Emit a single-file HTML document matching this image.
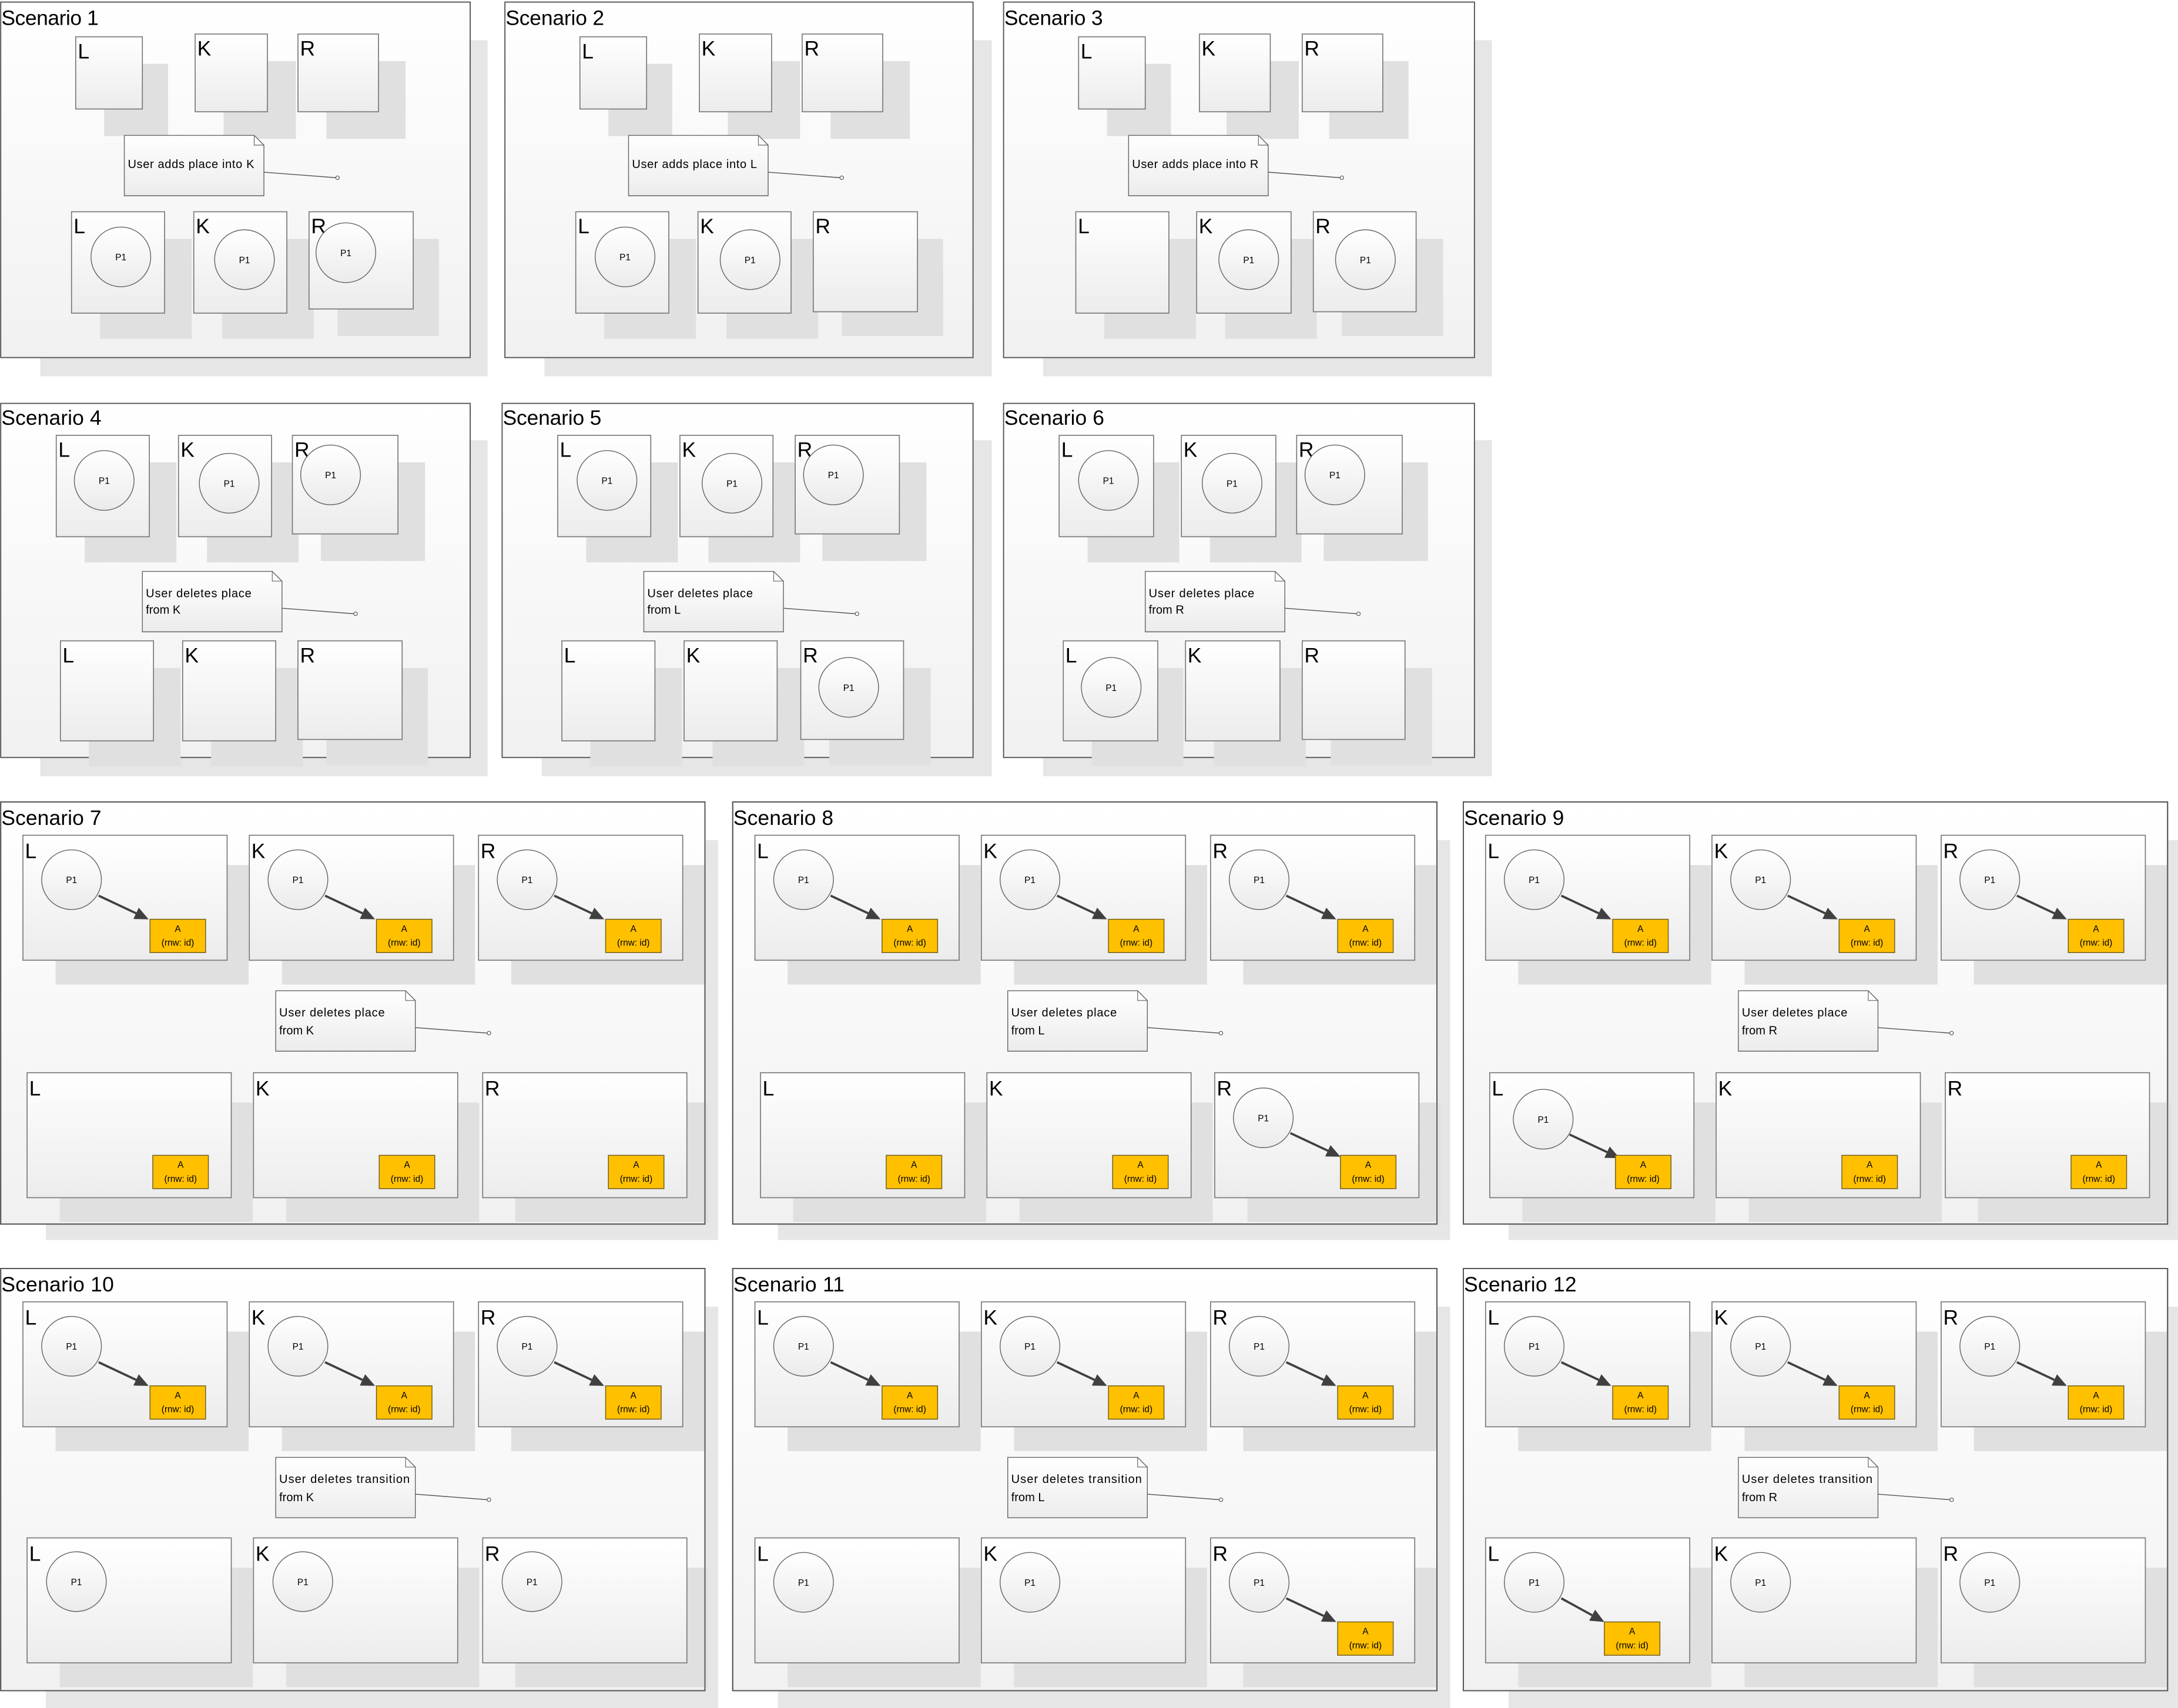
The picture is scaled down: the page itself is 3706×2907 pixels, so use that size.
<!DOCTYPE html>
<html><head><meta charset="utf-8"><style>
html,body{margin:0;padding:0;background:#fff;}
svg{display:block;}
text{font-family:"Liberation Sans",sans-serif;fill:#000;}
.t{font-size:15px;}
.l{font-size:15px;}
.p{font-size:6.5px;text-anchor:middle;}
.a{font-size:6.5px;text-anchor:middle;}
.n{font-size:8.5px;}
.fs{fill:#e6e6e6;}
.fr{fill:url(#gf);stroke:#555;stroke-width:0.8;}
.fo{fill:none;stroke:#555;stroke-width:0.8;}
.bs{fill:#e0e0e0;}
.bx{fill:url(#gb);stroke:#777;stroke-width:0.7;}
</style></head><body>
<svg width="3706" height="2907" viewBox="0 0 1568 1230" preserveAspectRatio="none" xmlns="http://www.w3.org/2000/svg">
<defs>
<linearGradient id="gf" x1="0" y1="0" x2="0" y2="1"><stop offset="0" stop-color="#ffffff"/><stop offset="1" stop-color="#f1f1f1"/></linearGradient>
<linearGradient id="gb" x1="0" y1="0" x2="0" y2="1"><stop offset="0" stop-color="#ffffff"/><stop offset="1" stop-color="#ececec"/></linearGradient>
<linearGradient id="gc" x1="0" y1="0" x2="0" y2="1"><stop offset="0" stop-color="#ffffff"/><stop offset="1" stop-color="#ebebeb"/></linearGradient>
<g id="B"><rect class="bs" x="24" y="22" width="139" height="86"/><rect class="bx" x="0.5" y="0.5" width="147" height="90"/></g>
<g id="C"><circle r="21.5" fill="url(#gc)" stroke="#666" stroke-width="0.6"/></g>
<g id="AR"><line x1="55" y1="44" x2="82" y2="56.7" stroke="#404040" stroke-width="1.6"/><polygon points="91,61 80.04,60.8 83.88,52.66" fill="#404040"/></g>
<g id="AB"><rect x="0" y="0" width="40" height="24" fill="#ffc000" stroke="#6b5a1e" stroke-width="0.6"/></g>
<g id="N"><path d="M0.5,0.5 H94 L101,7.5 V44 H0.5 Z" fill="url(#gb)" stroke="#666" stroke-width="0.6"/><path d="M94,0.5 V7.5 H101" fill="none" stroke="#666" stroke-width="0.5"/><line x1="101" y1="27" x2="153" y2="31" stroke="#555" stroke-width="0.6"/><circle cx="154" cy="31" r="1.3" fill="#fff" stroke="#555" stroke-width="0.5"/></g>
</defs>

<!-- ROW 1 -->
<g>
<rect class="fs" x="29" y="29" width="322" height="242"/><rect class="fr" x="0.5" y="1.5" width="338" height="256"/>
<text class="t" x="1" y="18" textLength="70">Scenario 1</text>
<rect class="bs" x="75" y="46" width="46" height="52"/><rect class="bx" x="54.5" y="26.5" width="48" height="52"/><text class="l" x="56" y="42">L</text>
<rect class="bs" x="161" y="44" width="52" height="56"/><rect class="bx" x="140.5" y="24.5" width="52" height="56"/><text class="l" x="142" y="40">K</text>
<rect class="bs" x="235" y="44" width="57" height="56"/><rect class="bx" x="214.5" y="24.5" width="58" height="56"/><text class="l" x="216" y="40">R</text>
<use href="#N" x="89" y="97"/><text class="n" x="92" y="121" textLength="91">User adds place into K</text>
<rect class="bs" x="72" y="172" width="66" height="72"/><rect class="bx" x="51.5" y="152.5" width="67" height="73"/><text class="l" x="53" y="168">L</text>
<rect class="bs" x="160" y="172" width="66" height="72"/><rect class="bx" x="139.5" y="152.5" width="67" height="73"/><text class="l" x="141" y="168">K</text>
<rect class="bs" x="243" y="172" width="73" height="70"/><rect class="bx" x="222.5" y="152.5" width="75" height="70"/><text class="l" x="224" y="168">R</text>
<use href="#C" x="87" y="185"/><text class="p" x="87" y="187.5">P1</text>
<use href="#C" x="176" y="187"/><text class="p" x="176" y="189.5">P1</text>
<use href="#C" x="249" y="182"/><text class="p" x="249" y="184.5">P1</text>
</g>
<g transform="translate(363,0)">
<rect class="fs" x="29" y="29" width="322" height="242"/><rect class="fr" x="0.5" y="1.5" width="337" height="256"/>
<text class="t" x="1" y="18" textLength="71">Scenario 2</text>
<rect class="bs" x="75" y="46" width="46" height="52"/><rect class="bx" x="54.5" y="26.5" width="48" height="52"/><text class="l" x="56" y="42">L</text>
<rect class="bs" x="161" y="44" width="52" height="56"/><rect class="bx" x="140.5" y="24.5" width="52" height="56"/><text class="l" x="142" y="40">K</text>
<rect class="bs" x="235" y="44" width="57" height="56"/><rect class="bx" x="214.5" y="24.5" width="58" height="56"/><text class="l" x="216" y="40">R</text>
<use href="#N" x="89" y="97"/><text class="n" x="92" y="121" textLength="90">User adds place into L</text>
<rect class="bs" x="72" y="172" width="66" height="72"/><rect class="bx" x="51.5" y="152.5" width="67" height="73"/><text class="l" x="53" y="168">L</text>
<rect class="bs" x="160" y="172" width="66" height="72"/><rect class="bx" x="139.5" y="152.5" width="67" height="73"/><text class="l" x="141" y="168">K</text>
<rect class="bs" x="243" y="172" width="73" height="70"/><rect class="bx" x="222.5" y="152.5" width="75" height="72"/><text class="l" x="224" y="168">R</text>
<use href="#C" x="87" y="185"/><text class="p" x="87" y="187.5">P1</text>
<use href="#C" x="177" y="187"/><text class="p" x="177" y="189.5">P1</text>
</g>
<g transform="translate(722,0)">
<rect class="fs" x="29" y="29" width="323" height="242"/><rect class="fr" x="0.5" y="1.5" width="339" height="256"/>
<text class="t" x="1" y="18" textLength="71">Scenario 3</text>
<rect class="bs" x="75" y="46" width="46" height="52"/><rect class="bx" x="54.5" y="26.5" width="48" height="52"/><text class="l" x="56" y="42">L</text>
<rect class="bs" x="161" y="44" width="52" height="56"/><rect class="bx" x="141.5" y="24.5" width="51" height="56"/><text class="l" x="143" y="40">K</text>
<rect class="bs" x="235" y="44" width="57" height="56"/><rect class="bx" x="215.5" y="24.5" width="58" height="56"/><text class="l" x="217" y="40">R</text>
<use href="#N" x="90" y="97"/><text class="n" x="93" y="121" textLength="91">User adds place into R</text>
<rect class="bs" x="73" y="172" width="66" height="72"/><rect class="bx" x="52.5" y="152.5" width="67" height="73"/><text class="l" x="54" y="168">L</text>
<rect class="bs" x="160" y="172" width="66" height="72"/><rect class="bx" x="139.5" y="152.5" width="68" height="73"/><text class="l" x="141" y="168">K</text>
<rect class="bs" x="244" y="172" width="73" height="70"/><rect class="bx" x="223.5" y="152.5" width="74" height="72"/><text class="l" x="225" y="168">R</text>
<use href="#C" x="177" y="187"/><text class="p" x="177" y="189.5">P1</text>
<use href="#C" x="261" y="187"/><text class="p" x="261" y="189.5">P1</text>
</g>

<!-- ROW 2 -->
<g transform="translate(0,289)">
<rect class="fs" x="29" y="28" width="322" height="242"/><rect class="fr" x="0.5" y="1.5" width="338" height="255"/>
<text class="t" x="1" y="17" textLength="72">Scenario 4</text>
<rect class="bs" x="61" y="44" width="66" height="72"/><rect class="bx" x="40.5" y="24.5" width="67" height="73"/><text class="l" x="42" y="40">L</text>
<rect class="bs" x="149" y="44" width="66" height="72"/><rect class="bx" x="128.5" y="24.5" width="67" height="73"/><text class="l" x="130" y="40">K</text>
<rect class="bs" x="231" y="44" width="75" height="71"/><rect class="bx" x="210.5" y="24.5" width="76" height="71"/><text class="l" x="212" y="40">R</text>
<use href="#C" x="75" y="57"/><text class="p" x="75" y="59.5">P1</text>
<use href="#C" x="165" y="59"/><text class="p" x="165" y="61.5">P1</text>
<use href="#C" x="238" y="53"/><text class="p" x="238" y="55.5">P1</text>
<use href="#N" x="102" y="122"/><text class="n" x="105" y="141" textLength="76">User deletes place</text><text class="n" x="105" y="153">from K</text>
<rect class="bs" x="64" y="192" width="66" height="71"/><rect class="bx" x="43.5" y="172.5" width="67" height="72"/><text class="l" x="45" y="188">L</text>
<rect class="bs" x="152" y="192" width="66" height="71"/><rect class="bx" x="131.5" y="172.5" width="67" height="72"/><text class="l" x="133" y="188">K</text>
<rect class="bs" x="235" y="192" width="73" height="70"/><rect class="bx" x="214.5" y="172.5" width="75" height="71"/><text class="l" x="216" y="188">R</text>
</g>
<g transform="translate(361,289)">
<rect class="fs" x="29" y="28" width="324" height="242"/><rect class="fr" x="0.5" y="1.5" width="339" height="255"/>
<text class="t" x="1" y="17" textLength="71">Scenario 5</text>
<rect class="bs" x="61" y="44" width="66" height="72"/><rect class="bx" x="40.5" y="24.5" width="67" height="73"/><text class="l" x="42" y="40">L</text>
<rect class="bs" x="149" y="44" width="66" height="72"/><rect class="bx" x="128.5" y="24.5" width="67" height="73"/><text class="l" x="130" y="40">K</text>
<rect class="bs" x="231" y="44" width="75" height="71"/><rect class="bx" x="211.5" y="24.5" width="75" height="71"/><text class="l" x="213" y="40">R</text>
<use href="#C" x="76" y="57"/><text class="p" x="76" y="59.5">P1</text>
<use href="#C" x="166" y="59"/><text class="p" x="166" y="61.5">P1</text>
<use href="#C" x="239" y="53"/><text class="p" x="239" y="55.5">P1</text>
<use href="#N" x="102" y="122"/><text class="n" x="105" y="141" textLength="76">User deletes place</text><text class="n" x="105" y="153">from L</text>
<rect class="bs" x="64" y="192" width="66" height="71"/><rect class="bx" x="43.5" y="172.5" width="67" height="72"/><text class="l" x="45" y="188">L</text>
<rect class="bs" x="152" y="192" width="66" height="71"/><rect class="bx" x="131.5" y="172.5" width="67" height="72"/><text class="l" x="133" y="188">K</text>
<rect class="bs" x="236" y="192" width="73" height="70"/><rect class="bx" x="215.5" y="172.5" width="74" height="71"/><text class="l" x="217" y="188">R</text>
<use href="#C" x="250" y="206"/><text class="p" x="250" y="208.5">P1</text>
</g>
<g transform="translate(722,289)">
<rect class="fs" x="29" y="28" width="323" height="242"/><rect class="fr" x="0.5" y="1.5" width="339" height="255"/>
<text class="t" x="1" y="17" textLength="72">Scenario 6</text>
<rect class="bs" x="61" y="44" width="66" height="72"/><rect class="bx" x="40.5" y="24.5" width="68" height="73"/><text class="l" x="42" y="40">L</text>
<rect class="bs" x="149" y="44" width="66" height="72"/><rect class="bx" x="128.5" y="24.5" width="68" height="73"/><text class="l" x="130" y="40">K</text>
<rect class="bs" x="231" y="44" width="75" height="71"/><rect class="bx" x="211.5" y="24.5" width="76" height="71"/><text class="l" x="213" y="40">R</text>
<use href="#C" x="76" y="57"/><text class="p" x="76" y="59.5">P1</text>
<use href="#C" x="165" y="59"/><text class="p" x="165" y="61.5">P1</text>
<use href="#C" x="239" y="53"/><text class="p" x="239" y="55.5">P1</text>
<use href="#N" x="102" y="122"/><text class="n" x="105" y="141" textLength="76">User deletes place</text><text class="n" x="105" y="153">from R</text>
<rect class="bs" x="64" y="192" width="66" height="71"/><rect class="bx" x="43.5" y="172.5" width="68" height="72"/><text class="l" x="45" y="188">L</text>
<rect class="bs" x="152" y="192" width="66" height="71"/><rect class="bx" x="131.5" y="172.5" width="68" height="72"/><text class="l" x="133" y="188">K</text>
<rect class="bs" x="236" y="192" width="73" height="70"/><rect class="bx" x="215.5" y="172.5" width="74" height="71"/><text class="l" x="217" y="188">R</text>
<use href="#C" x="78" y="206"/><text class="p" x="78" y="208.5">P1</text>
</g>

<!-- ROW 3 -->
<g transform="translate(0,577)">
<rect class="fs" x="33" y="28" width="484" height="288"/><rect class="fr" x="0.5" y="0.5" width="507" height="304"/>
<text class="t" x="1" y="17" textLength="72">Scenario 7</text>
<use href="#B" x="16" y="24"/><text class="l" x="18" y="41">L</text><use href="#C" x="51.5" y="56.5"/><text class="p" x="51.5" y="59">P1</text><use href="#AR" x="16" y="24"/><use href="#AB" x="108" y="85"/><text class="a" x="128" y="94">A</text><text class="a" x="128" y="104">(rnw: id)</text>
<use href="#B" x="179" y="24"/><text class="l" x="181" y="41">K</text><use href="#C" x="214.5" y="56.5"/><text class="p" x="214.5" y="59">P1</text><use href="#AR" x="179" y="24"/><use href="#AB" x="271" y="85"/><text class="a" x="291" y="94">A</text><text class="a" x="291" y="104">(rnw: id)</text>
<use href="#B" x="344" y="24"/><text class="l" x="346" y="41">R</text><use href="#C" x="379.5" y="56.5"/><text class="p" x="379.5" y="59">P1</text><use href="#AR" x="344" y="24"/><use href="#AB" x="436" y="85"/><text class="a" x="456" y="94">A</text><text class="a" x="456" y="104">(rnw: id)</text>
<use href="#N" x="198" y="136"/><text class="n" x="201" y="155" textLength="76">User deletes place</text><text class="n" x="201" y="168">from K</text>
<use href="#B" x="19" y="195"/><text class="l" x="21" y="212">L</text><use href="#AB" x="110" y="255"/><text class="a" x="130" y="264">A</text><text class="a" x="130" y="274">(rnw: id)</text>
<use href="#B" x="182" y="195"/><text class="l" x="184" y="212">K</text><use href="#AB" x="273" y="255"/><text class="a" x="293" y="264">A</text><text class="a" x="293" y="274">(rnw: id)</text>
<use href="#B" x="347" y="195"/><text class="l" x="349" y="212">R</text><use href="#AB" x="438" y="255"/><text class="a" x="458" y="264">A</text><text class="a" x="458" y="274">(rnw: id)</text>
<rect class="fo" x="0.5" y="0.5" width="507" height="304"/>
</g>
<g transform="translate(527,577)">
<rect class="fs" x="33" y="28" width="484" height="288"/><rect class="fr" x="0.5" y="0.5" width="507" height="304"/>
<text class="t" x="1" y="17" textLength="72">Scenario 8</text>
<use href="#B" x="16" y="24"/><text class="l" x="18" y="41">L</text><use href="#C" x="51.5" y="56.5"/><text class="p" x="51.5" y="59">P1</text><use href="#AR" x="16" y="24"/><use href="#AB" x="108" y="85"/><text class="a" x="128" y="94">A</text><text class="a" x="128" y="104">(rnw: id)</text>
<use href="#B" x="179" y="24"/><text class="l" x="181" y="41">K</text><use href="#C" x="214.5" y="56.5"/><text class="p" x="214.5" y="59">P1</text><use href="#AR" x="179" y="24"/><use href="#AB" x="271" y="85"/><text class="a" x="291" y="94">A</text><text class="a" x="291" y="104">(rnw: id)</text>
<use href="#B" x="344" y="24"/><text class="l" x="346" y="41">R</text><use href="#C" x="379.5" y="56.5"/><text class="p" x="379.5" y="59">P1</text><use href="#AR" x="344" y="24"/><use href="#AB" x="436" y="85"/><text class="a" x="456" y="94">A</text><text class="a" x="456" y="104">(rnw: id)</text>
<use href="#N" x="198" y="136"/><text class="n" x="201" y="155" textLength="76">User deletes place</text><text class="n" x="201" y="168">from L</text>
<use href="#B" x="20" y="195"/><text class="l" x="22" y="212">L</text><use href="#AB" x="111" y="255"/><text class="a" x="131" y="264">A</text><text class="a" x="131" y="274">(rnw: id)</text>
<use href="#B" x="183" y="195"/><text class="l" x="185" y="212">K</text><use href="#AB" x="274" y="255"/><text class="a" x="294" y="264">A</text><text class="a" x="294" y="274">(rnw: id)</text>
<use href="#B" x="347" y="195"/><text class="l" x="349" y="212">R</text><use href="#C" x="382.5" y="228"/><text class="p" x="382.5" y="230.5">P1</text><use href="#AR" x="347" y="195"/><use href="#AB" x="438" y="255"/><text class="a" x="458" y="264">A</text><text class="a" x="458" y="274">(rnw: id)</text>
<rect class="fo" x="0.5" y="0.5" width="507" height="304"/>
</g>
<g transform="translate(1053,577)">
<rect class="fs" x="33" y="28" width="484" height="288"/><rect class="fr" x="0.5" y="0.5" width="507" height="304"/>
<text class="t" x="1" y="17" textLength="72">Scenario 9</text>
<use href="#B" x="16" y="24"/><text class="l" x="18" y="41">L</text><use href="#C" x="51.5" y="56.5"/><text class="p" x="51.5" y="59">P1</text><use href="#AR" x="16" y="24"/><use href="#AB" x="108" y="85"/><text class="a" x="128" y="94">A</text><text class="a" x="128" y="104">(rnw: id)</text>
<use href="#B" x="179" y="24"/><text class="l" x="181" y="41">K</text><use href="#C" x="214.5" y="56.5"/><text class="p" x="214.5" y="59">P1</text><use href="#AR" x="179" y="24"/><use href="#AB" x="271" y="85"/><text class="a" x="291" y="94">A</text><text class="a" x="291" y="104">(rnw: id)</text>
<use href="#B" x="344" y="24"/><text class="l" x="346" y="41">R</text><use href="#C" x="379.5" y="56.5"/><text class="p" x="379.5" y="59">P1</text><use href="#AR" x="344" y="24"/><use href="#AB" x="436" y="85"/><text class="a" x="456" y="94">A</text><text class="a" x="456" y="104">(rnw: id)</text>
<use href="#N" x="198" y="136"/><text class="n" x="201" y="155" textLength="76">User deletes place</text><text class="n" x="201" y="168">from R</text>
<use href="#B" x="19" y="195"/><text class="l" x="21" y="212">L</text><use href="#C" x="58" y="229"/><text class="p" x="58" y="231.5">P1</text><use href="#AR" x="22" y="196"/><use href="#AB" x="110" y="255"/><text class="a" x="130" y="264">A</text><text class="a" x="130" y="274">(rnw: id)</text>
<use href="#B" x="182" y="195"/><text class="l" x="184" y="212">K</text><use href="#AB" x="273" y="255"/><text class="a" x="293" y="264">A</text><text class="a" x="293" y="274">(rnw: id)</text>
<use href="#B" x="347" y="195"/><text class="l" x="349" y="212">R</text><use href="#AB" x="438" y="255"/><text class="a" x="458" y="264">A</text><text class="a" x="458" y="274">(rnw: id)</text>
<rect class="fo" x="0.5" y="0.5" width="507" height="304"/>
</g>

<!-- ROW 4 -->
<g transform="translate(0,913)">
<rect class="fs" x="33" y="28" width="484" height="289"/><rect class="fr" x="0.5" y="0.5" width="507" height="304"/>
<text class="t" x="1" y="17" textLength="81">Scenario 10</text>
<use href="#B" x="16" y="24"/><text class="l" x="18" y="41">L</text><use href="#C" x="51.5" y="56.5"/><text class="p" x="51.5" y="59">P1</text><use href="#AR" x="16" y="24"/><use href="#AB" x="108" y="85"/><text class="a" x="128" y="94">A</text><text class="a" x="128" y="104">(rnw: id)</text>
<use href="#B" x="179" y="24"/><text class="l" x="181" y="41">K</text><use href="#C" x="214.5" y="56.5"/><text class="p" x="214.5" y="59">P1</text><use href="#AR" x="179" y="24"/><use href="#AB" x="271" y="85"/><text class="a" x="291" y="94">A</text><text class="a" x="291" y="104">(rnw: id)</text>
<use href="#B" x="344" y="24"/><text class="l" x="346" y="41">R</text><use href="#C" x="379.5" y="56.5"/><text class="p" x="379.5" y="59">P1</text><use href="#AR" x="344" y="24"/><use href="#AB" x="436" y="85"/><text class="a" x="456" y="94">A</text><text class="a" x="456" y="104">(rnw: id)</text>
<use href="#N" x="198" y="136"/><text class="n" x="201" y="155" textLength="94">User deletes transition</text><text class="n" x="201" y="168">from K</text>
<use href="#B" x="19" y="194"/><text class="l" x="21" y="211">L</text><use href="#C" x="55" y="226"/><text class="p" x="55" y="228.5">P1</text>
<use href="#B" x="182" y="194"/><text class="l" x="184" y="211">K</text><use href="#C" x="218" y="226"/><text class="p" x="218" y="228.5">P1</text>
<use href="#B" x="347" y="194"/><text class="l" x="349" y="211">R</text><use href="#C" x="383" y="226"/><text class="p" x="383" y="228.5">P1</text>
<rect class="fo" x="0.5" y="0.5" width="507" height="304"/>
</g>
<g transform="translate(527,913)">
<rect class="fs" x="33" y="28" width="484" height="289"/><rect class="fr" x="0.5" y="0.5" width="507" height="304"/>
<text class="t" x="1" y="17" textLength="80">Scenario 11</text>
<use href="#B" x="16" y="24"/><text class="l" x="18" y="41">L</text><use href="#C" x="51.5" y="56.5"/><text class="p" x="51.5" y="59">P1</text><use href="#AR" x="16" y="24"/><use href="#AB" x="108" y="85"/><text class="a" x="128" y="94">A</text><text class="a" x="128" y="104">(rnw: id)</text>
<use href="#B" x="179" y="24"/><text class="l" x="181" y="41">K</text><use href="#C" x="214.5" y="56.5"/><text class="p" x="214.5" y="59">P1</text><use href="#AR" x="179" y="24"/><use href="#AB" x="271" y="85"/><text class="a" x="291" y="94">A</text><text class="a" x="291" y="104">(rnw: id)</text>
<use href="#B" x="344" y="24"/><text class="l" x="346" y="41">R</text><use href="#C" x="379.5" y="56.5"/><text class="p" x="379.5" y="59">P1</text><use href="#AR" x="344" y="24"/><use href="#AB" x="436" y="85"/><text class="a" x="456" y="94">A</text><text class="a" x="456" y="104">(rnw: id)</text>
<use href="#N" x="198" y="136"/><text class="n" x="201" y="155" textLength="94">User deletes transition</text><text class="n" x="201" y="168">from L</text>
<use href="#B" x="16" y="194"/><text class="l" x="18" y="211">L</text><use href="#C" x="51.5" y="226.5"/><text class="p" x="51.5" y="229">P1</text>
<use href="#B" x="179" y="194"/><text class="l" x="181" y="211">K</text><use href="#C" x="214.5" y="226.5"/><text class="p" x="214.5" y="229">P1</text>
<use href="#B" x="344" y="194"/><text class="l" x="346" y="211">R</text><use href="#C" x="379.5" y="226.5"/><text class="p" x="379.5" y="229">P1</text><use href="#AR" x="344" y="194"/><use href="#AB" x="436" y="255"/><text class="a" x="456" y="264">A</text><text class="a" x="456" y="274">(rnw: id)</text>
<rect class="fo" x="0.5" y="0.5" width="507" height="304"/>
</g>
<g transform="translate(1053,913)">
<rect class="fs" x="33" y="28" width="484" height="289"/><rect class="fr" x="0.5" y="0.5" width="507" height="304"/>
<text class="t" x="1" y="17" textLength="81">Scenario 12</text>
<use href="#B" x="16" y="24"/><text class="l" x="18" y="41">L</text><use href="#C" x="51.5" y="56.5"/><text class="p" x="51.5" y="59">P1</text><use href="#AR" x="16" y="24"/><use href="#AB" x="108" y="85"/><text class="a" x="128" y="94">A</text><text class="a" x="128" y="104">(rnw: id)</text>
<use href="#B" x="179" y="24"/><text class="l" x="181" y="41">K</text><use href="#C" x="214.5" y="56.5"/><text class="p" x="214.5" y="59">P1</text><use href="#AR" x="179" y="24"/><use href="#AB" x="271" y="85"/><text class="a" x="291" y="94">A</text><text class="a" x="291" y="104">(rnw: id)</text>
<use href="#B" x="344" y="24"/><text class="l" x="346" y="41">R</text><use href="#C" x="379.5" y="56.5"/><text class="p" x="379.5" y="59">P1</text><use href="#AR" x="344" y="24"/><use href="#AB" x="436" y="85"/><text class="a" x="456" y="94">A</text><text class="a" x="456" y="104">(rnw: id)</text>
<use href="#N" x="198" y="136"/><text class="n" x="201" y="155" textLength="94">User deletes transition</text><text class="n" x="201" y="168">from R</text>
<use href="#B" x="16" y="194"/><text class="l" x="18" y="211">L</text><use href="#C" x="51.5" y="226.5"/><text class="p" x="51.5" y="229">P1</text>
<line x1="71" y1="238" x2="93.2" y2="250.2" stroke="#404040" stroke-width="1.6"/><polygon points="102,255 91.07,254.14 95.39,246.24" fill="#404040"/>
<use href="#AB" x="102" y="255"/><text class="a" x="122" y="264">A</text><text class="a" x="122" y="274">(rnw: id)</text>
<use href="#B" x="179" y="194"/><text class="l" x="181" y="211">K</text><use href="#C" x="214.5" y="226.5"/><text class="p" x="214.5" y="229">P1</text>
<use href="#B" x="344" y="194"/><text class="l" x="346" y="211">R</text><use href="#C" x="379.5" y="226.5"/><text class="p" x="379.5" y="229">P1</text>
<rect class="fo" x="0.5" y="0.5" width="507" height="304"/>
</g>
</svg>
</body></html>
